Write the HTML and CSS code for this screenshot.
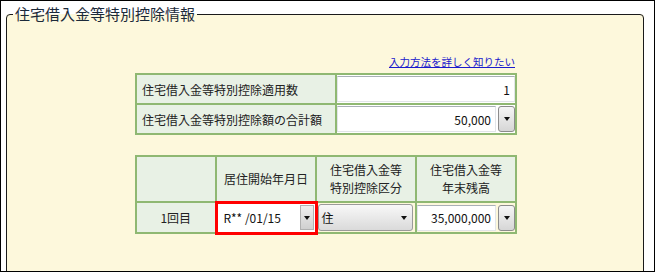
FILE: index.html
```html
<!DOCTYPE html>
<html lang="ja">
  <head>
    <meta charset="UTF-8" />
    <title>住宅借入金等特別控除情報</title>
    <link rel="stylesheet" href="styles.css">
  </head>
  <body>
    <div class="frame">
      <fieldset class="box">
        <legend>住宅借入金等特別控除情報</legend>
        <div class="content">
          <div class="help"><a href="#">入力方法を詳しく知りたい</a></div>
          <table class="grid summary">
            <col class="c-label" /><col class="c-value" />
            <tr>
              <th>住宅借入金等特別控除適用数</th>
              <td><div class="field"><span class="val">1</span></div></td>
            </tr>
            <tr>
              <th>住宅借入金等特別控除額の合計額</th>
              <td>
                <div class="combo">
                  <div class="field"><span class="val">50,000</span></div>
                  <span class="drop"></span>
                </div>
              </td>
            </tr>
          </table>
          <table class="grid detail">
            <col class="c-no" /><col class="c-date" /><col class="c-kind" /><col class="c-amount" />
            <tr class="head">
              <th></th>
              <th>居住開始年月日</th>
              <th>住宅借入金等<br />特別控除区分</th>
              <th>住宅借入金等<br />年末残高</th>
            </tr>
            <tr>
              <th class="no">1回目</th>
              <td class="date">
                <div class="combo">
                  <div class="field"><span class="val left">R** /01/15</span></div>
                  <span class="drop flat"></span>
                </div>
              </td>
              <td class="kind">
                <div class="select"><span>住</span><span class="arrow"></span></div>
              </td>
              <td>
                <div class="combo">
                  <div class="field"><span class="val">35,000,000</span></div>
                  <span class="drop"></span>
                </div>
              </td>
            </tr>
          </table>
        </div>
      </fieldset>
    </div>
  </body>
</html>
```

FILE: styles.css
```css
* {
  margin: 0;
  padding: 0;
  box-sizing: border-box;
}
body {
  background: #fff;
  font-family: "Noto Sans CJK JP", "Noto Sans", sans-serif;
  color: #222;
}
.frame {
  width: 655px;
  height: 272px;
  border: 1px solid #000;
  padding: 4px 10px 0 5px;
  overflow: hidden;
}
.box {
  height: 300px;
  border: 1px solid #1a1a1a;
  border-radius: 4px;
  background: #fdf8dc;
  padding: 0;
}
.box legend {
  margin-left: 6px;
  padding: 0 2px;
  font-size: 15px;
  line-height: 18px;
  color: #1c2a3a;
}
.content {
  padding: 32px 0 0 128px;
  width: 511px;
}
.help {
  text-align: right;
  font-size: 10.5px;
  line-height: 14px;
  height: 14px;
  margin-bottom: 4px;
  padding-right: 3px;
}
.help a {
  color: #1a1acc;
  text-decoration: underline;
}
.grid {
  border-collapse: collapse;
  table-layout: fixed;
  font-size: 12px;
}
.grid th,
.grid td {
  border: 2px solid #8fb872;
  font-weight: normal;
}
.grid th {
  background: #e8f1e5;
}
.summary {
  width: 382px;
}
.summary .c-label {
  width: 200px;
}
.summary tr {
  height: 30px;
}
.summary th {
  text-align: left;
  padding-left: 5px;
}
.summary td {
  padding: 0;
  background: #fff;
}
.detail {
  width: 381px;
  margin-top: 20px;
}
.detail .c-no {
  width: 80px;
}
.detail .c-date,
.detail .c-amount {
  width: 100px;
}
.detail .c-kind {
  width: 100px;
}
.detail .head {
  height: 46px;
}
.detail .head th {
  line-height: 18px;
  text-align: center;
}
.detail tr {
  height: 30px;
}
.detail td {
  padding: 0;
  background: #fdf8dc;
}
.detail .no {
  text-align: center;
}
.detail td.date {
  border: 3px solid #f00;
  background: #fff;
}
.field {
  flex: 1;
  height: 26px;
  background: #fff;
  border: 1px solid #e2e5e9;
  border-top-color: #a9b0b7;
  display: flex;
  align-items: center;
  justify-content: flex-end;
  padding: 0 4px;
}
.val {
  color: #111;
}
.val.left {
  margin-right: auto;
  padding-left: 1px;
}
.combo {
  display: flex;
  align-items: center;
  gap: 2px;
}
.drop {
  width: 17px;
  height: 26px;
  border: 1px solid #8c8c8c;
  border-radius: 3px;
  background: linear-gradient(#f6f6f6, #d6d6d6);
  display: flex;
  align-items: center;
  justify-content: center;
}
.drop::after,
.select .arrow::after {
  content: "";
  border-left: 3px solid transparent;
  border-right: 3px solid transparent;
  border-top: 4px solid #111;
}
.drop.flat {
  width: 14px;
  height: 25px;
  border-radius: 0;
  border-color: #b0b0b0;
  background: linear-gradient(#eee, #d0d0d0);
}
.date .combo {
  gap: 0;
  padding-right: 1px;
}
.date .field {
  height: 25px;
  border: 0;
  padding-left: 5px;
}
.kind {
  padding: 1px 2px 1px 0 !important;
}
.select {
  height: 27px;
  border: 1px solid #9a9a9a;
  border-radius: 3px;
  background: linear-gradient(#f8f8f8, #dadada);
  display: flex;
  align-items: center;
  justify-content: space-between;
  padding: 0 5px 0 3px;
  color: #111;
}
.select .arrow {
  display: flex;
}
```
